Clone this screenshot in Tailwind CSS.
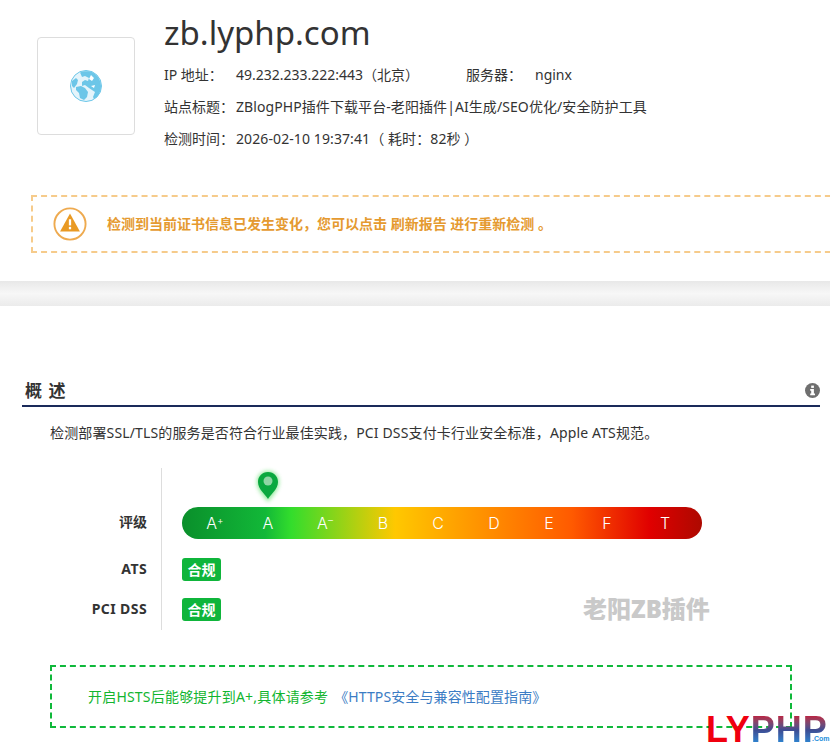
<!DOCTYPE html>
<html lang="zh-CN">
  <head>
    <meta charset="UTF-8" />
    <meta name="viewport" content="width=device-width, initial-scale=1.0" />
    <script src="https://cdn.jsdelivr.net/npm/@tailwindcss/browser@4"></script>
    <title>zb.lyphp.com</title>
  </head>
  <body class="relative h-[747px] w-[830px] overflow-hidden bg-white font-['Noto_Sans','Noto_Sans_CJK_SC',sans-serif] text-[#333]">
    <!-- header -->
    <header class="h-[281px] overflow-hidden">
      <div class="flex h-[172px] pl-[37px]">
        <div class="mt-[37px] flex size-[98px] items-center justify-center rounded-[4px] border border-[#ddd]">
          <svg class="size-8" viewBox="0 0 32 32">
            <circle cx="16" cy="16" r="15.5" fill="#e4f4fb" stroke="#6cc6e8" />
            <path fill="#6cc6e8" d="M10 2.5 C13 1 19 1 22 2 L25 4 C28 6 31 11 31 16 C31 22 28 27 24 29 L23 27 L25 22 L22 20 L19 18 L15 15 L12 16 L12 12 L15 10 L18 11 L19 8 L15 6 L12 7 Z" />
            <path fill="#6cc6e8" d="M2 11 L6 8 L8 10 L7 14 L4 18 L2 16 Z" />
            <path fill="#6cc6e8" d="M6 17 L11 16 L15 18 L18 22 L17 27 L14 30 L10 28 L9 23 L6 20 Z" />
            <path fill="#fff" d="M21 5 L24 8 L22 11 L19 9 Z M21 16 L25 15 L24 18 Z" />
          </svg>
        </div>
        <div class="ml-[29px] min-w-0">
          <h1 class="mt-[11px] h-[44px] text-[33px] leading-[44px]">zb.lyphp.com</h1>
          <div class="mt-[4px] flex h-8 items-center text-sm">
            <span class="w-[72px]">IP 地址：</span>
            <span class="w-[230px]">49.232.233.222:443（北京）</span>
            <span class="w-[69px]">服务器：</span>
            <span>nginx</span>
          </div>
          <div class="flex h-8 items-center text-sm whitespace-nowrap">
            <span class="w-[72px]">站点标题：</span>
            <span class="tracking-[0.08px]">ZBlogPHP插件下载平台-老阳插件|AI生成/SEO优化/安全防护工具</span>
          </div>
          <div class="flex h-8 items-center text-sm">
            <span class="w-[72px]">检测时间：</span>
            <span class="tracking-[0.1px]">2026-02-10 19:37:41（ 耗时：82秒 ）</span>
          </div>
        </div>
      </div>
      <div class="mt-[23px] ml-[31px] flex h-[58px] w-[820px] items-center border-2 border-dashed border-[#f6cb8b] pl-[20px]">
        <svg class="size-[34px] shrink-0" viewBox="0 0 36 36">
          <circle cx="18" cy="18" r="16.5" fill="none" stroke="#eeaa4f" stroke-width="2" />
          <path fill="#e99a24" d="M18 7 L28.5 26 H7.5 Z" />
          <rect x="16.8" y="13" width="2.4" height="6.5" fill="#fff" />
          <rect x="16.8" y="21" width="2.4" height="2.6" fill="#fff" />
        </svg>
        <p class="ml-[20px] text-sm font-bold whitespace-nowrap text-[#e59a30]">检测到当前证书信息已发生变化，您可以点击 刷新报告 进行重新检测 。</p>
      </div>
    </header>

    <div class="h-[25px] bg-gradient-to-b from-[#e8e8e8] via-[#f7f7f7] to-[#ebebeb]"></div>

    <!-- overview -->
    <section class="px-[10px] pt-[70px]">
      <div class="ml-[12px] flex h-[31px] w-[798px] items-start justify-between border-b-2 border-[#1a2a5a]">
        <h2 class="pl-[3px] text-[17px] leading-[30px] font-bold tracking-[1px]">概 述</h2>
        <svg class="mt-[7px] size-[15px]" viewBox="0 0 15 15">
          <circle cx="7.5" cy="7.5" r="7.5" fill="#6f6f6f" />
          <rect x="6.2" y="2.6" width="2.7" height="2.3" fill="#fff" />
          <path fill="#fff" d="M5.2 6.1 H8.9 V10.6 H10 V12.2 H5.2 V10.6 H6.2 V7.7 H5.2 Z" />
        </svg>
      </div>
      <p class="mt-[16px] ml-[40px] h-5 text-sm leading-5 tracking-[0.14px] whitespace-nowrap">检测部署SSL/TLS的服务是否符合行业最佳实践，PCI DSS支付卡行业安全标准，Apple ATS规范。</p>

      <div class="mt-[25px] ml-[10px] flex h-[162px]">
        <div class="w-[142px] border-r border-[#ddd] pr-[14px] text-right text-sm font-bold">
          <div class="mt-[44px] h-5 leading-5">评级</div>
          <div class="mt-[27px] h-5 leading-5 tracking-[0.4px]">ATS</div>
          <div class="mt-[20px] h-5 leading-5 tracking-[0.4px]">PCI DSS</div>
        </div>
        <div class="relative ml-[20px] w-[520px]">
          <svg class="absolute top-[1px] left-[70px] overflow-visible" width="32" height="36" viewBox="0 0 32 36">
            <path class="blur-[2px]" fill="#39d84a" opacity=".55" d="M16 2 C23 2 27 7 27 13 C27 21 20 27 16 33 C12 27 5 21 5 13 C5 7 9 2 16 2 Z" />
            <path fill="#0aa83f" d="M16 3 C22 3 26 7.500 26 13 C26 20 19 25 16 30 C13 25 6 20 6 13 C6 7.500 10 3 16 3 Z" />
            <circle cx="16" cy="12" r="4.500" fill="#8fd6a4" />
          </svg>
          <div class="mt-[39px] flex h-8 rounded-2xl bg-[linear-gradient(90deg,#0a8f2b_0%,#12b838_16%,#33dd2c_21%,#ffc800_41%,#ff9a00_55%,#ff5a00_75%,#e00000_90%,#ad0900_100%)] pl-[6px] font-['Inter',sans-serif] text-base leading-8 font-light text-white">
            <span class="w-[54px] text-center">A<sup class="text-[10px]">+</sup></span>
            <span class="w-[52px] text-center">A</span>
            <span class="w-[62px] text-center">A<sup class="text-[10px]">–</sup></span>
            <span class="w-[54px] text-center">B</span>
            <span class="w-[56px] text-center">C</span>
            <span class="w-[56px] text-center">D</span>
            <span class="w-[54px] text-center">E</span>
            <span class="w-[62px] text-center">F</span>
            <span class="w-[54px] text-center">T</span>
          </div>
          <div class="mt-[19px] flex h-[23px] w-[39px] items-center justify-center rounded-[3px] bg-[#0fb53b] text-sm font-bold text-white">合规</div>
          <div class="mt-[17px] flex h-[23px] w-[39px] items-center justify-center rounded-[3px] bg-[#0fb53b] text-sm font-bold text-white">合规</div>
        </div>
      </div>

      <div class="mt-[35px] ml-[40px] flex h-[63px] w-[742px] items-center border-2 border-dashed border-[#0fb83a] pl-[36px] text-sm tracking-[0.1px]">
        <span class="tracking-[0.2px] text-[#12b52f]">开启HSTS后能够提升到A+,具体请参考</span>
        <a class="ml-[6px] text-[#3b7cc4]" href="#">《HTTPS安全与兼容性配置指南》</a>
      </div>
    </section>

    <!-- watermarks -->
    <div class="absolute top-[592px] left-[583px] text-[24px] leading-[34px] font-black whitespace-nowrap text-[#c9c9c9]">老阳ZB插件</div>
    <div class="absolute top-[715px] left-[706px] flex items-baseline font-['Liberation_Sans',sans-serif] text-[36px] leading-[30px] font-bold tracking-[1px]">
      <span class="text-[#f0000f]">LY</span>
      <span class="bg-gradient-to-b from-[#c0143c] via-[#3d4c92] to-[#1f8fdc] bg-clip-text text-transparent">PHP</span>
    </div>
    <div class="absolute top-[734px] left-[812px] font-['Liberation_Sans',sans-serif] text-[7px] leading-[9px] font-bold text-[#1f8fdc]">.Com</div>
  </body>
</html>
